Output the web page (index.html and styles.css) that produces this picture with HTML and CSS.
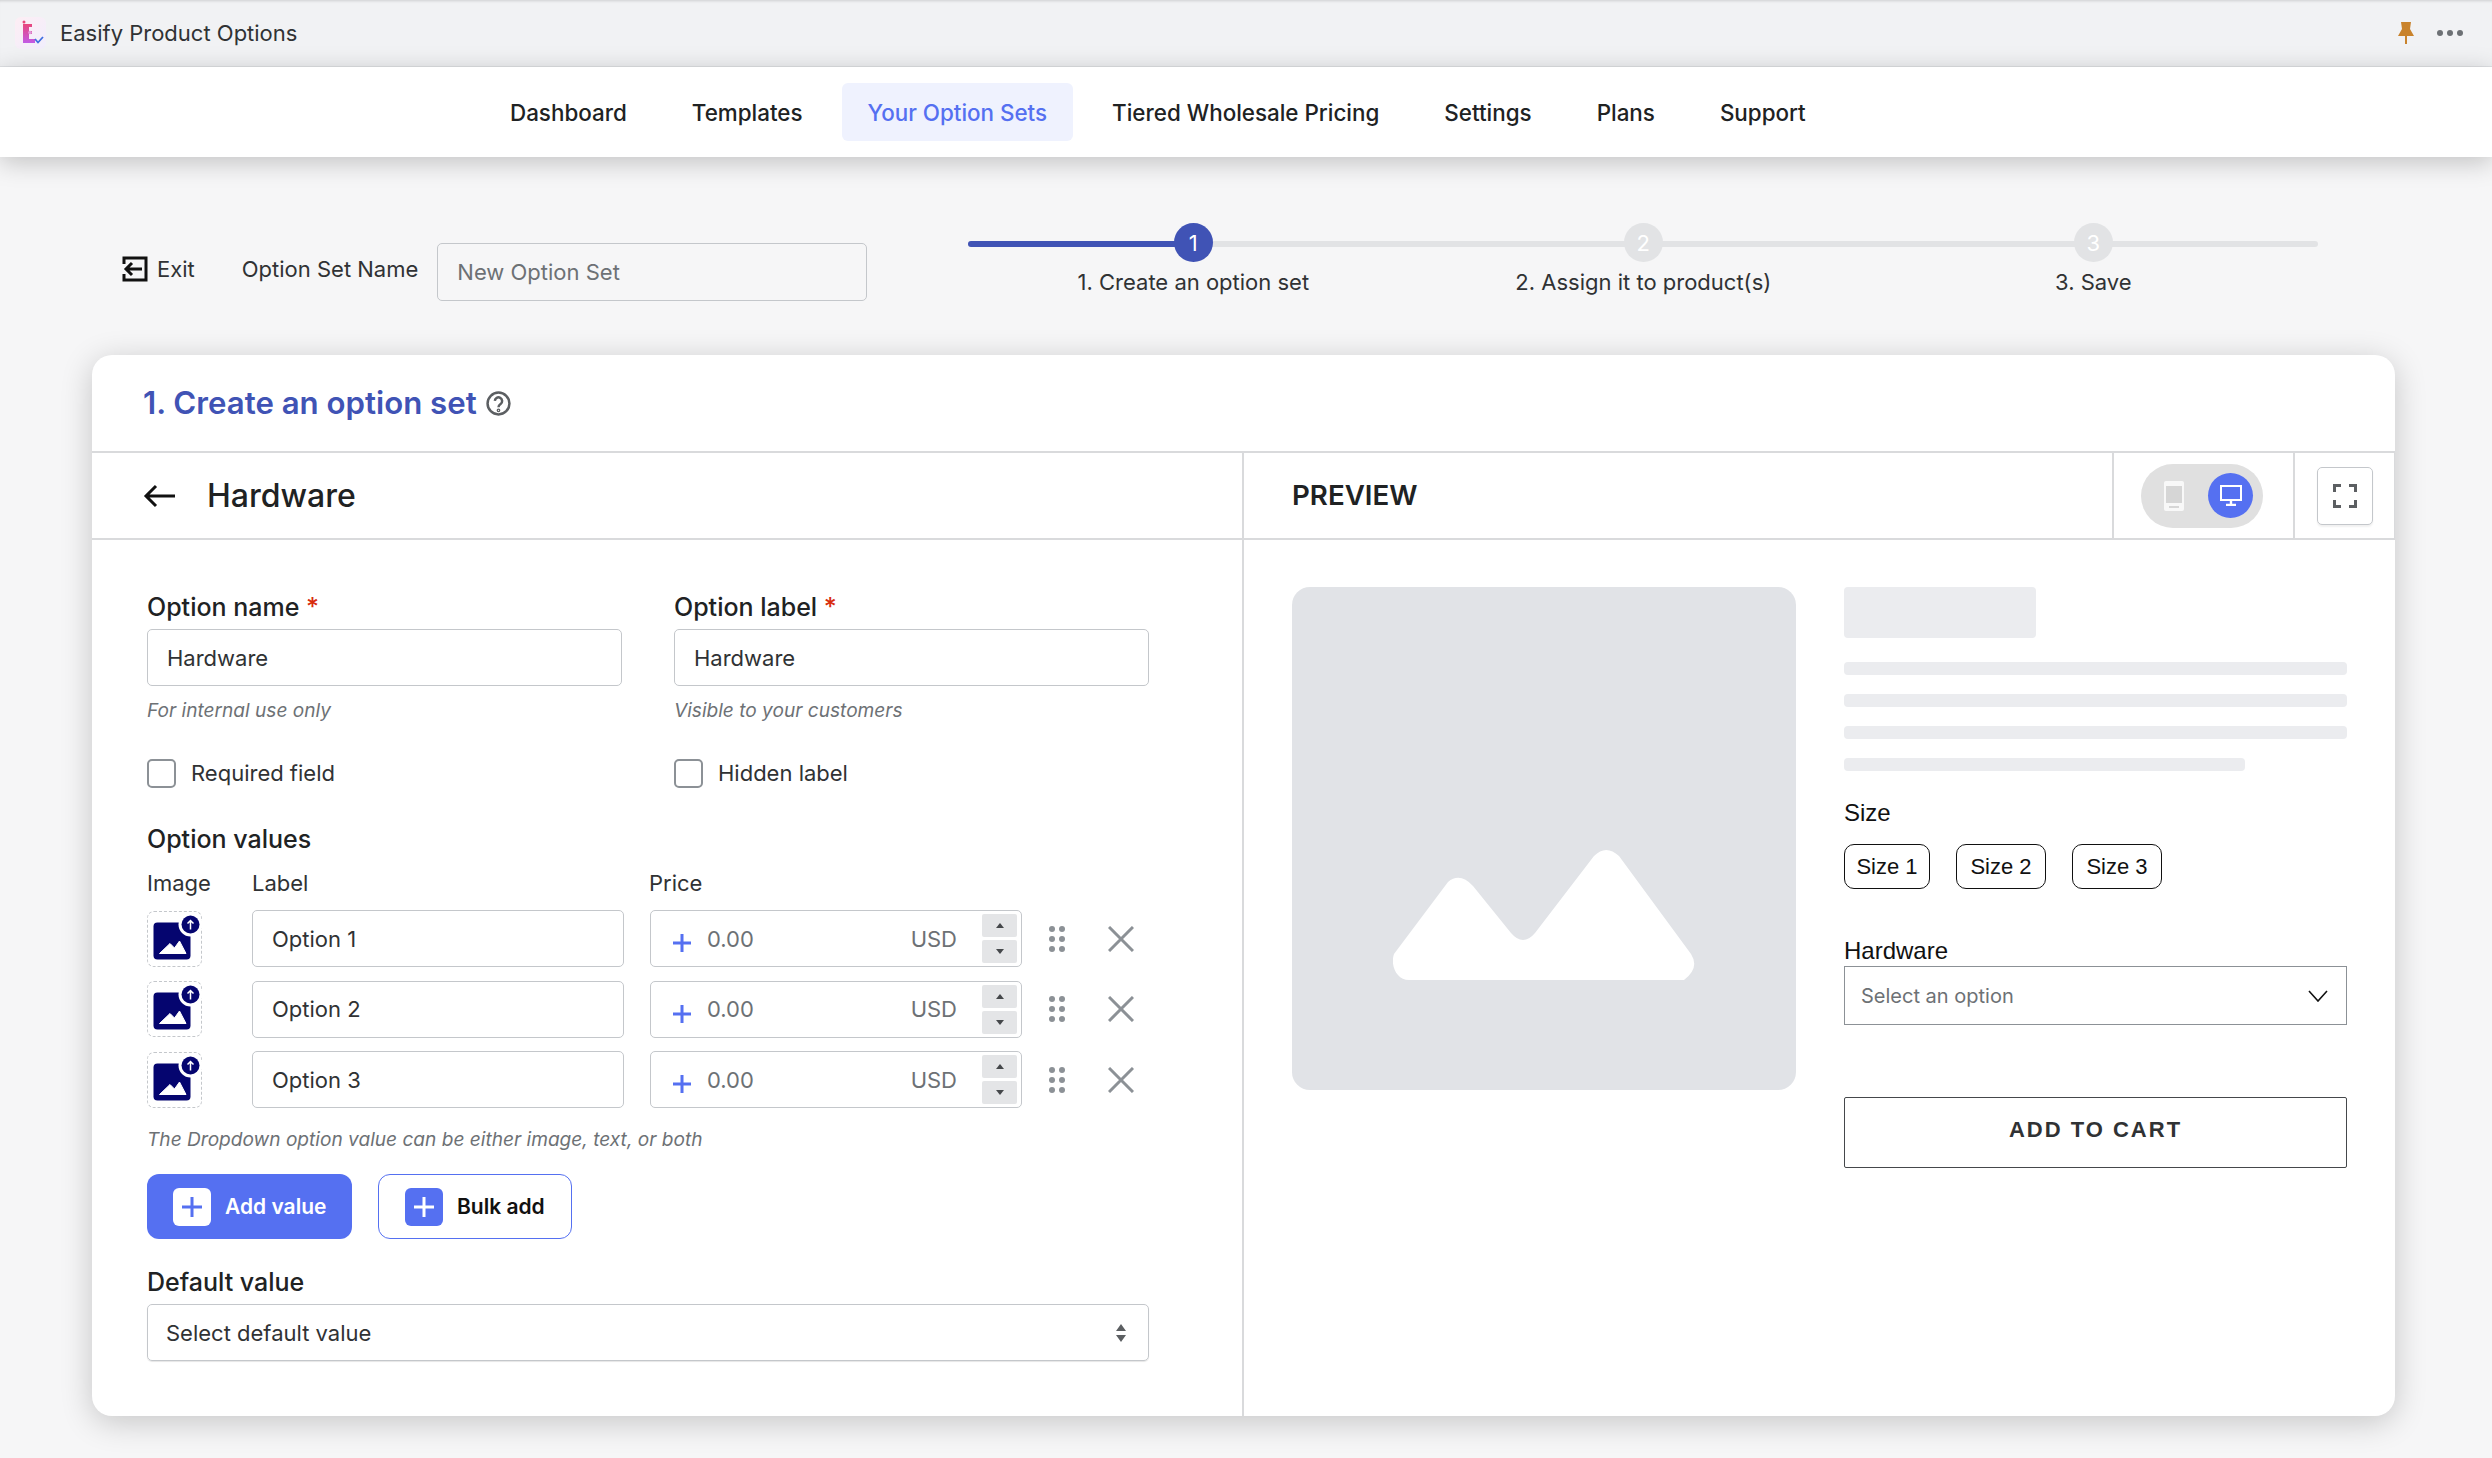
FILE: index.html
```html
<!DOCTYPE html>
<html lang="en">
<head>
    <meta charset="UTF-8">
    <title>Easify Product Options</title>
    <link rel="stylesheet" href="styles.css">
</head>
<body>
    <svg class="icon-defs" width="0" height="0">
        <symbol id="thumb" viewBox="0 0 55 56">
            <rect x="6.500" y="11.500" width="37" height="37" rx="4" fill="#05056f"/>
            <circle cx="43.500" cy="13.500" r="12" fill="#fff"/>
            <circle cx="43.500" cy="13.500" r="9" fill="#05056f"/>
            <path d="M43.500 18.500V9.500M40.500 12.500l3-3 3 3" stroke="#fff" stroke-width="1.500" fill="none"/>
            <path d="M12.500 42.500l10.500-10 4.500 4.500 5-7 6.500 12.500z" fill="#fff" stroke="#fff" stroke-linejoin="round"/>
        </symbol>
        <symbol id="plus-blue" viewBox="0 0 20 20">
            <path d="M10 1v18M1 10h18" stroke="#5570f1" stroke-width="3"/>
        </symbol>
        <symbol id="drag" viewBox="0 0 16 26">
            <circle cx="3" cy="3" r="3"/><circle cx="13" cy="3" r="3"/>
            <circle cx="3" cy="13" r="3"/><circle cx="13" cy="13" r="3"/>
            <circle cx="3" cy="23" r="3"/><circle cx="13" cy="23" r="3"/>
        </symbol>
        <symbol id="close" viewBox="0 0 26 26">
            <path d="M1 1l24 24M25 1L1 25" stroke="#8c9196" stroke-width="3"/>
        </symbol>
    </svg>

    <div class="topbar">
        <div class="app-name">
            <svg class="app-logo" width="31" height="32" viewBox="0 0 31 32">
                <defs>
                    <linearGradient id="logoGrad" x1="0" y1="0" x2="0" y2="1">
                        <stop offset="0" stop-color="#e8467c"/>
                        <stop offset="1" stop-color="#c25be6"/>
                    </linearGradient>
                    <linearGradient id="logoBg" x1="0" y1="0" x2="1" y2="1">
                        <stop offset="0" stop-color="#fdeef4"/>
                        <stop offset="1" stop-color="#f1eefc"/>
                    </linearGradient>
                </defs>
                <rect width="31" height="32" rx="6" fill="url(#logoBg)"/>
                <path d="M8 7h9v3h-3v4h3v3h-3v5h6v4H8z" fill="url(#logoGrad)"/>
                <circle cx="9" cy="5" r="1.500" fill="#e8467c"/>
                <circle cx="15" cy="15.500" r="1.800" fill="#e39bd8"/>
                <path d="M20 22l3 3.500 5-5.500" stroke="#3f6fe0" stroke-width="1.800" fill="none"/>
            </svg>
            <span>Easify Product Options</span>
        </div>
        <div class="topbar-actions">
            <svg width="16" height="22" viewBox="0 0 16 22">
                <path d="M3 0h10l-1 7 4 7H9v8H7v-8H0l4-7z" fill="#c9832c"/>
            </svg>
            <svg class="more-dots" width="26" height="6" viewBox="0 0 26 6" fill="#6d7175">
                <circle cx="3" cy="3" r="3"/><circle cx="13" cy="3" r="3"/><circle cx="23" cy="3" r="3"/>
            </svg>
        </div>
    </div>

    <nav class="main-nav">
        <a class="nav-item">Dashboard</a>
        <a class="nav-item">Templates</a>
        <a class="nav-item active">Your Option Sets</a>
        <a class="nav-item">Tiered Wholesale Pricing</a>
        <a class="nav-item">Settings</a>
        <a class="nav-item">Plans</a>
        <a class="nav-item">Support</a>
    </nav>

    <div class="toolbar">
        <div class="set-name">
            <a class="exit-link">
                <svg width="26" height="26" viewBox="0 0 26 26" fill="none" stroke="#111" stroke-width="3">
                    <path d="M2 8V2h22v22H2v-6"/>
                    <path d="M20 13H4M10 7l-6 6 6 6"/>
                </svg>
                Exit
            </a>
            <label class="set-label">Option Set Name</label>
            <input class="text-input set-input" type="text" placeholder="New Option Set">
        </div>
        <div class="stepper">
            <div class="stepper-track"><div class="stepper-fill"></div></div>
            <div class="step current"><div class="step-dot">1</div><div class="step-text">1. Create an option set</div></div>
            <div class="step"><div class="step-dot">2</div><div class="step-text">2. Assign it to product(s)</div></div>
            <div class="step"><div class="step-dot">3</div><div class="step-text">3. Save</div></div>
        </div>
    </div>

    <div class="card">
        <div class="card-title">
            <h1>1. Create an option set</h1>
            <svg width="25" height="25" viewBox="0 0 24 24" fill="none" stroke="#5c5f62" stroke-width="2.400">
                <circle cx="12" cy="12" r="10.500"/>
                <path d="M8.500 9.500a3.500 3.500 0 1 1 5.500 3c-1.300.9-2 1.500-2 3"/>
                <circle cx="12" cy="18.500" r=".6"/>
            </svg>
        </div>
        <div class="card-body">
            <div class="editor">
                <div class="editor-head">
                    <svg width="32" height="24" viewBox="0 0 32 24" fill="none" stroke="#111" stroke-width="3">
                        <path d="M32 12H3M13 2L3 12l10 10"/>
                    </svg>
                    <h2>Hardware</h2>
                </div>
                <div class="editor-form">
                    <div class="two-col">
                        <div class="field">
                            <label class="field-label">Option name <span class="req">*</span></label>
                            <input class="text-input" type="text" value="Hardware">
                            <div class="hint">For internal use only</div>
                            <label class="check"><span class="check-box"></span>Required field</label>
                        </div>
                        <div class="field">
                            <label class="field-label">Option label <span class="req">*</span></label>
                            <input class="text-input" type="text" value="Hardware">
                            <div class="hint">Visible to your customers</div>
                            <label class="check"><span class="check-box"></span>Hidden label</label>
                        </div>
                    </div>

                    <div class="field-label values-title">Option values</div>
                    <div class="values-head">
                        <span class="col-image">Image</span>
                        <span class="col-label">Label</span>
                        <span>Price</span>
                    </div>

                    <div class="value-row">
                        <div class="thumb"><svg width="55" height="56"><use href="#thumb"/></svg></div>
                        <input class="text-input value-label" type="text" value="Option 1">
                        <div class="price">
                            <svg width="20" height="20"><use href="#plus-blue"/></svg>
                            <span class="price-num">0.00</span>
                            <span class="price-cur">USD</span>
                            <div class="spin"><span class="spin-up"></span><span class="spin-down"></span></div>
                        </div>
                        <svg class="drag" width="16" height="26"><use href="#drag"/></svg>
                        <svg class="remove" width="26" height="26"><use href="#close"/></svg>
                    </div>
                    <div class="value-row">
                        <div class="thumb"><svg width="55" height="56"><use href="#thumb"/></svg></div>
                        <input class="text-input value-label" type="text" value="Option 2">
                        <div class="price">
                            <svg width="20" height="20"><use href="#plus-blue"/></svg>
                            <span class="price-num">0.00</span>
                            <span class="price-cur">USD</span>
                            <div class="spin"><span class="spin-up"></span><span class="spin-down"></span></div>
                        </div>
                        <svg class="drag" width="16" height="26"><use href="#drag"/></svg>
                        <svg class="remove" width="26" height="26"><use href="#close"/></svg>
                    </div>
                    <div class="value-row">
                        <div class="thumb"><svg width="55" height="56"><use href="#thumb"/></svg></div>
                        <input class="text-input value-label" type="text" value="Option 3">
                        <div class="price">
                            <svg width="20" height="20"><use href="#plus-blue"/></svg>
                            <span class="price-num">0.00</span>
                            <span class="price-cur">USD</span>
                            <div class="spin"><span class="spin-up"></span><span class="spin-down"></span></div>
                        </div>
                        <svg class="drag" width="16" height="26"><use href="#drag"/></svg>
                        <svg class="remove" width="26" height="26"><use href="#close"/></svg>
                    </div>

                    <div class="hint values-hint">The Dropdown option value can be either image, text, or both</div>

                    <div class="value-actions">
                        <button class="btn btn-primary">
                            <span class="btn-plus"><svg width="24" height="24" viewBox="0 0 24 24"><path d="M12 2v20M2 12h20" stroke="#5570f1" stroke-width="3"/></svg></span>
                            Add value
                        </button>
                        <button class="btn btn-outline">
                            <span class="btn-plus"><svg width="24" height="24" viewBox="0 0 24 24"><path d="M12 2v20M2 12h20" stroke="#fff" stroke-width="3"/></svg></span>
                            Bulk add
                        </button>
                    </div>

                    <div class="field-label default-title">Default value</div>
                    <div class="default-select">
                        <span>Select default value</span>
                        <svg width="12" height="18" viewBox="0 0 12 18" fill="#5c5f62"><path d="M6 0l5 7H1zM6 18l-5-7h10z"/></svg>
                    </div>
                </div>
            </div>

            <div class="preview">
                <div class="preview-head">
                    <div class="preview-title">PREVIEW</div>
                    <div class="device-cell">
                        <div class="device-toggle">
                            <svg class="device-phone" width="20" height="30" viewBox="0 0 20 30">
                                <rect width="20" height="30" rx="2" fill="#f8f8f8"/>
                                <rect x="2" y="5" width="16" height="17" fill="#d6d6d6"/>
                                <rect x="5" y="25" width="10" height="2" fill="#d6d6d6"/>
                            </svg>
                            <span class="device-on">
                                <svg width="22" height="21" viewBox="0 0 22 21" fill="none">
                                    <rect x="1" y="1" width="20" height="14" stroke="#fff" stroke-width="2"/>
                                    <path d="M11 16v3M6 20h10" stroke="#fff" stroke-width="2.400"/>
                                </svg>
                            </span>
                        </div>
                    </div>
                    <div class="expand-cell">
                        <button class="expand-btn">
                            <svg width="24" height="24" viewBox="0 0 24 24" fill="none" stroke="#5c5f62" stroke-width="3">
                                <path d="M1.500 8V1.500H8M16 1.500h6.500V8M1.500 16v6.500H8M16 22.500h6.500V16"/>
                            </svg>
                        </button>
                    </div>
                </div>
                <div class="preview-body">
                    <div class="product-image">
                        <svg width="303" height="130" viewBox="0 0 303 130">
                            <path fill="#fff" d="M16 130C4 130-3 116 1 104L55 32Q67 22 80 36L118 83Q130 97 142 83L201 6Q213-6 226 6L298 104Q307 118 291 130Z"/>
                        </svg>
                    </div>
                    <div class="product-info">
                        <div class="skel skel-title"></div>
                        <div class="skel skel-line"></div>
                        <div class="skel skel-line"></div>
                        <div class="skel skel-line"></div>
                        <div class="skel skel-line skel-short"></div>
                        <div class="opt-title">Size</div>
                        <div class="size-list">
                            <span class="size-btn">Size 1</span>
                            <span class="size-btn">Size 2</span>
                            <span class="size-btn">Size 3</span>
                        </div>
                        <div class="opt-title hardware-title">Hardware</div>
                        <div class="opt-select">
                            <span>Select an option</span>
                            <svg width="20" height="12" viewBox="0 0 20 12" fill="none" stroke="#111" stroke-width="1.600"><path d="M1 1l9 10 9-10"/></svg>
                        </div>
                        <button class="cart-btn">ADD TO CART</button>
                    </div>
                </div>
            </div>
        </div>
    </div>
</body>
</html>
```

FILE: styles.css
```css
* {
    margin: 0;
    padding: 0;
    box-sizing: border-box;
    font-family: Inter, "Liberation Sans", sans-serif;
}

body {
    background: #f6f6f7;
    color: #202223;
    height: 1458px;
    overflow: hidden;
}

.icon-defs {
    display: block;
    height: 0;
}

.topbar {
    height: 67px;
    background: #f1f2f4;
    border-bottom: 1px solid #dfe1e4;
    box-shadow: inset 0 3px 3px -2px rgba(0,0,0,0.15);
    display: flex;
    align-items: center;
    justify-content: space-between;
    padding: 0 29px 0 15px;
}

.app-name {
    display: flex;
    align-items: center;
    gap: 14px;
    font-size: 22px;
    color: #303234;
}

.topbar-actions {
    display: flex;
    align-items: center;
    gap: 23px;
}

.main-nav {
    height: 90px;
    background: #fff;
    display: flex;
    align-items: center;
    gap: 13px;
    padding: 0 0 0 484px;
    box-shadow: 0 5px 24px rgba(0,0,0,0.22);
    position: relative;
}

.nav-item {
    height: 58px;
    padding: 0 26px;
    display: flex;
    align-items: center;
    font-size: 22.400px;
    font-weight: 500;
    color: #202223;
    border-radius: 6px;
}

.nav-item.active {
    background: #eff2fe;
    color: #5570f1;
}

.toolbar {
    height: 198px;
    display: flex;
    align-items: flex-start;
    padding: 66px 0 0 122px;
}

.set-name {
    display: flex;
    align-items: center;
    margin-top: 20px;
    height: 58px;
    font-size: 22px;
    color: #303234;
}

.exit-link {
    display: flex;
    align-items: center;
    gap: 9px;
    margin-right: 47px;
    padding-bottom: 6px;
}

.set-label {
    margin-right: 19px;
    padding-bottom: 6px;
}

.text-input {
    display: block;
    width: 100%;
    height: 57px;
    padding: 0 19px;
    border: 1px solid #c4c7cb;
    border-radius: 5px;
    background: #fff;
    font-size: 22px;
    color: #303234;
    outline: none;
}

.set-input {
    width: 430px;
    height: 58px;
    background: #f6f6f7;
}

.set-input::placeholder {
    color: #6d7175;
}

.stepper {
    position: relative;
    width: 1350px;
    margin-left: 101px;
    display: grid;
    grid-template-columns: repeat(3, 1fr);
}

.stepper-track {
    position: absolute;
    top: 18px;
    left: 0;
    right: 0;
    height: 6px;
    background: #e2e3e5;
    border-radius: 3px;
}

.stepper-fill {
    width: 226px;
    height: 6px;
    background: #4053b5;
    border-radius: 3px;
}

.step {
    display: flex;
    flex-direction: column;
    align-items: center;
    position: relative;
}

.step-dot {
    width: 39px;
    height: 39px;
    border-radius: 50%;
    background: #e2e3e5;
    color: #fff;
    font-size: 22px;
    display: flex;
    align-items: center;
    justify-content: center;
}

.step.current .step-dot {
    background: #4053b5;
}

.step-text {
    margin-top: 3px;
    font-size: 22px;
    line-height: 34px;
    color: #303234;
}

.card {
    width: 2303px;
    height: 1061px;
    margin-left: 92px;
    background: #fff;
    border-radius: 20px;
    box-shadow: 0 6px 32px rgba(0,0,0,0.2);
    overflow: hidden;
}

.card-title {
    height: 98px;
    padding: 0 0 0 51px;
    display: flex;
    align-items: center;
    gap: 9px;
    border-bottom: 2px solid #d9dadc;
}

.card-title h1 {
    font-size: 31.200px;
    font-weight: 600;
    color: #4053b5;
}

.card-body {
    display: flex;
    height: 963px;
}

.editor {
    width: 1152px;
    border-right: 2px solid #d9dadc;
}

.editor-head {
    height: 87px;
    display: flex;
    align-items: center;
    gap: 32px;
    padding-left: 51px;
    border-bottom: 2px solid #d9dadc;
}

.editor-head h2 {
    font-size: 32px;
    font-weight: 500;
}

.editor-form {
    padding: 51px 93px 0 55px;
}

.two-col {
    display: grid;
    grid-template-columns: 475px 475px;
    gap: 52px;
}

.field-label {
    font-size: 25px;
    line-height: 32px;
    font-weight: 500;
    display: block;
    color: #202223;
}

.req {
    color: #d82c0d;
}

.field .field-label {
    margin-bottom: 6px;
}

.hint {
    font-size: 19.100px;
    line-height: 26px;
    font-style: italic;
    color: #6d7175;
    margin-top: 11px;
}

.check {
    display: flex;
    align-items: center;
    gap: 15px;
    margin-top: 35px;
    font-size: 22px;
    line-height: 30px;
    color: #303234;
}

.check-box {
    width: 29px;
    height: 29px;
    border: 2px solid #8c9196;
    border-radius: 5px;
    background: #fff;
}

.values-title {
    margin-top: 35px;
}

.values-head {
    display: flex;
    font-size: 22px;
    line-height: 30px;
    margin-top: 13px;
    color: #303234;
}

.col-image {
    width: 105px;
}

.col-label {
    width: 397px;
}

.value-row {
    display: flex;
    align-items: center;
    height: 57px;
    margin-top: 13.500px;
}

.values-head + .value-row {
    margin-top: 12px;
}

.thumb {
    width: 55px;
    height: 56px;
    border: 1px dashed #c4c7cb;
    border-radius: 7px;
    margin-right: 50px;
    overflow: visible;
    display: flex;
    align-items: center;
    justify-content: center;
}

.thumb svg {
    flex: none;
}

.value-label {
    width: 372px;
    margin-right: 26px;
}

.price {
    width: 372px;
    height: 57px;
    border: 1px solid #c4c7cb;
    border-radius: 5px;
    display: flex;
    align-items: center;
    padding-left: 21px;
    font-size: 22px;
    color: #6d7175;
}

.price svg {
    margin-top: 9px;
}

.price-num {
    margin-left: 15px;
    flex: 1;
}

.spin {
    width: 35px;
    margin: 0 4px 0 25px;
    display: flex;
    flex-direction: column;
    gap: 3px;
}

.spin span {
    height: 23px;
    background: #e4e5e7;
    border-radius: 2px;
    display: flex;
    align-items: center;
    justify-content: center;
}

.spin-up::after {
    content: "";
    border: 4px solid transparent;
    border-top: 0;
    border-bottom: 5px solid #45484b;
}

.spin-down::after {
    content: "";
    border: 4px solid transparent;
    border-bottom: 0;
    border-top: 5px solid #45484b;
}

.drag {
    fill: #8c9196;
    margin-left: 27px;
}

.remove {
    margin-left: 43px;
}

.values-hint {
    margin-top: 18px;
}

.value-actions {
    display: flex;
    gap: 26px;
    margin-top: 22px;
}

.btn {
    height: 65px;
    display: flex;
    align-items: center;
    gap: 14px;
    border-radius: 12px;
    font-size: 21px;
    font-weight: 600;
    cursor: pointer;
}

.btn-plus {
    width: 38px;
    height: 38px;
    border-radius: 6px;
    display: flex;
    align-items: center;
    justify-content: center;
}

.btn-primary {
    width: 205px;
    padding-left: 26px;
    background: #5570f1;
    border: none;
    color: #fff;
}

.btn-primary .btn-plus {
    background: #fff;
}

.btn-outline {
    width: 194px;
    padding-left: 26px;
    background: #fff;
    border: 1px solid #5570f1;
    color: #111;
}

.btn-outline .btn-plus {
    background: #5570f1;
}

.default-title {
    margin-top: 27px;
}

.default-select {
    height: 57px;
    margin-top: 6px;
    border: 1px solid #c4c7cb;
    border-radius: 5px;
    box-shadow: 0 1px 1px rgba(0,0,0,0.1);
    display: flex;
    align-items: center;
    justify-content: space-between;
    padding: 0 21px 0 18px;
    font-size: 22px;
    color: #303234;
}

.preview {
    flex: 1;
}

.preview-head {
    height: 87px;
    display: flex;
    border-bottom: 2px solid #d9dadc;
}

.preview-title {
    flex: 1;
    display: flex;
    align-items: center;
    padding: 0 0 2px 48px;
    font-size: 27.700px;
    font-weight: 600;
}

.device-cell {
    width: 181px;
    border-left: 2px solid #d9dadc;
    display: flex;
    align-items: center;
    padding-left: 27px;
}

.device-toggle {
    width: 122px;
    height: 64px;
    border-radius: 32px;
    background: #e0e0e0;
    display: flex;
    align-items: center;
    justify-content: space-between;
    padding: 0 10px 0 23px;
}

.device-on {
    width: 45px;
    height: 45px;
    border-radius: 50%;
    background: #5570f1;
    display: flex;
    align-items: center;
    justify-content: center;
}

.expand-cell {
    width: 102px;
    border-left: 2px solid #d9dadc;
    border-right: 1px solid #d9dadc;
    display: flex;
    align-items: center;
    padding-left: 22px;
}

.expand-btn {
    width: 56px;
    height: 58px;
    border: 1px solid #c4c7cb;
    border-radius: 5px;
    background: #fff;
    box-shadow: 0 2px 2px rgba(0,0,0,0.06);
    display: flex;
    align-items: center;
    justify-content: center;
}

.preview-body {
    display: flex;
    gap: 48px;
    padding: 47px 0 0 48px;
}

.product-image {
    width: 504px;
    height: 503px;
    background: #e1e3e7;
    border-radius: 18px;
    display: flex;
    justify-content: center;
    padding-top: 263px;
}

.product-info {
    width: 503px;
}

.skel {
    background: #ebecef;
    border-radius: 4px;
}

.skel-title {
    width: 192px;
    height: 51px;
    margin-bottom: 24px;
}

.skel-line {
    height: 13px;
    margin-bottom: 19px;
}

.skel-short {
    width: 401px;
}

.opt-title {
    font-family: "Liberation Sans", sans-serif;
    font-size: 24px;
    line-height: 30px;
    color: #111;
    margin-top: 27px;
}

.size-list {
    display: flex;
    gap: 26px;
    margin-top: 16px;
}

.size-btn {
    width: 90px;
    height: 45px;
    border: 1px solid #111;
    border-radius: 10px;
    font-family: "Liberation Sans", sans-serif;
    font-size: 22px;
    display: flex;
    align-items: center;
    justify-content: center;
    color: #111;
}

.size-btn:first-child {
    width: 86px;
}

.hardware-title {
    margin-top: 47px;
}

.opt-select {
    height: 59px;
    border: 1px solid #8c9196;
    display: flex;
    align-items: center;
    justify-content: space-between;
    padding: 0 18px 0 16px;
    font-family: "Liberation Sans", sans-serif;
    font-size: 20px;
    color: #6d7175;
}

.cart-btn {
    display: block;
    width: 100%;
    height: 71px;
    margin-top: 72px;
    padding-bottom: 6px;
    border: 1px solid #45484b;
    border-radius: 2px;
    background: #fff;
    font-family: "Liberation Sans", sans-serif;
    font-size: 22px;
    font-weight: 700;
    letter-spacing: 2px;
    color: #303234;
}
```
